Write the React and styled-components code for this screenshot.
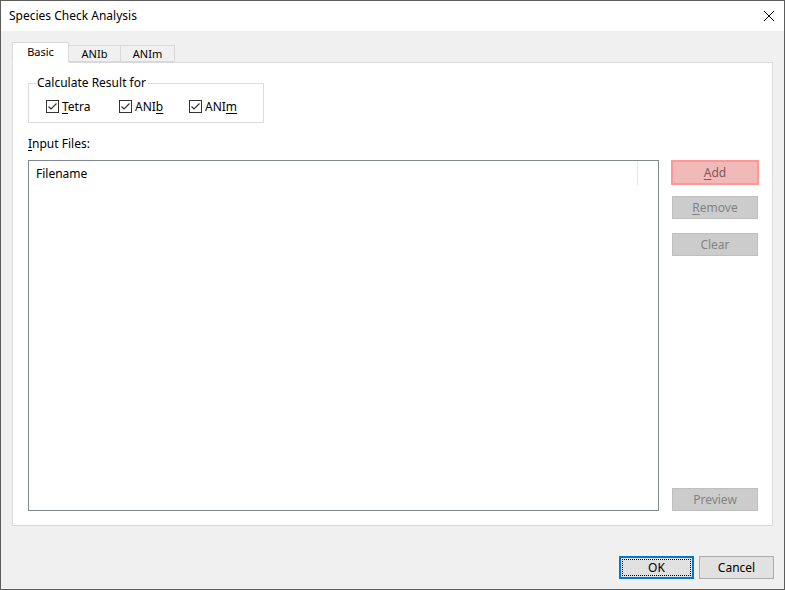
import React, { useState } from 'react';
import styled, { createGlobalStyle } from 'styled-components';

const GlobalStyle = createGlobalStyle`
  html, body {
    margin: 0;
    padding: 0;
    background: #f0f0f0;
  }
  body {
    font-family: 'Noto Sans', 'Open Sans', sans-serif;
    font-size: 12px;
    color: #000;
  }
  * {
    box-sizing: border-box;
  }
`;

const Window = styled.div`
  width: 785px;
  height: 590px;
  border: 1px solid #5c5c5c;
  display: flex;
  flex-direction: column;
  background: #f0f0f0;
`;

const TitleBar = styled.div`
  height: 30px;
  background: #fff;
  display: flex;
  align-items: center;
  justify-content: space-between;
  padding: 0 9px 1px 8px;
  font-size: 12px;
`;

const CloseBox = styled.span`
  width: 12px;
  height: 12px;
  display: flex;
`;

const Body = styled.div`
  flex: 1;
  display: flex;
  flex-direction: column;
  padding: 11px 11px 0 11px;
`;

const TabStrip = styled.div`
  display: flex;
  align-items: flex-end;
  height: 21px;
  position: relative;
  z-index: 1;
`;

const Tab = styled.div`
  height: ${(p) => (p.$active ? '21px' : '17px')};
  width: ${(p) => p.$w}px;
  margin-left: ${(p) => (p.$first ? 0 : -1)}px;
  background: ${(p) => (p.$active ? '#fff' : '#f0f0f0')};
  border: 1px solid #d9d9d9;
  border-bottom: ${(p) => (p.$active ? '1px solid #fff' : '1px solid #d9d9d9')};
  display: flex;
  align-items: center;
  justify-content: center;
  font-size: 11px;
  padding-bottom: ${(p) => (p.$active ? 2 : 0)}px;
  cursor: default;
  margin-bottom: ${(p) => (p.$active ? 0 : 1)}px;
`;

const Panel = styled.div`
  height: 464px;
  margin-top: -1px;
  background: #fff;
  border: 1px solid #d9d9d9;
  padding: 12px 14px 14px 15px;
  display: flex;
  flex-direction: column;
`;

const GroupBox = styled.fieldset`
  margin: 0;
  width: 236px;
  min-width: 0;
  height: 48px;
  border: 1px solid #dcdcdc;
  padding: 0 8px 0 7px;
  display: block;
`;

const Legend = styled.legend`
  padding: 0 2px 0 1px;
  font-size: 12px;
  line-height: 16px;
`;

const CheckRow = styled.div`
  display: flex;
  align-items: center;
  height: 16px;
  padding-left: 10px;
  margin-top: 7px;
`;

const CheckItem = styled.label`
  display: flex;
  align-items: center;
  width: ${(p) => (p.$w ? `${p.$w}px` : 'auto')};
  gap: 3px;
  font-size: 12px;
`;

const Box = styled.span`
  width: 13px;
  height: 13px;
  flex: none;
  border: 1px solid #333;
  background: #fff;
  display: flex;
  align-items: center;
  justify-content: center;
`;

const Key = styled.span`
  text-decoration: underline;
  text-underline-offset: 2px;
`;

const FieldLabel = styled.div`
  margin-top: 13px;
  height: 16px;
  line-height: 16px;
  font-size: 12px;
`;

const Main = styled.div`
  flex: 1;
  display: flex;
  gap: 13px;
  margin-top: 8px;
`;

const ListBox = styled.div`
  width: 631px;
  height: 351px;
  border: 1px solid #828790;
  background: #fff;
`;

const ListHeader = styled.div`
  height: 24px;
  display: flex;
`;

const HeaderCell = styled.div`
  width: 609px;
  padding: 1px 0 0 7px;
  border-right: 1px solid #e5e5e5;
  display: flex;
  align-items: center;
  font-size: 12px;
`;

const Side = styled.div`
  width: 86px;
  display: flex;
  flex-direction: column;
`;

const Button = styled.button`
  font-family: inherit;
  font-size: 12px;
  height: ${(p) => (p.$hot ? 25 : 23)}px;
  width: ${(p) => (p.$hot ? 88 : 86)}px;
  margin: ${(p) => (p.$hot ? '0 0 0 -1px' : 0)};
  margin-top: ${(p) => (p.$bottom ? 'auto' : `${p.$mt || 0}px`)};
  padding: 0;
  background: ${(p) => (p.$hot ? '#f2b9b9' : '#cccccc')};
  border: ${(p) => (p.$hot ? '2px solid #ff9797' : '1px solid #bfbfbf')};
  color: ${(p) => (p.$hot ? '#7b5a5a' : '#838383')};
  cursor: default;
`;

const Footer = styled.div`
  display: flex;
  justify-content: flex-end;
  gap: 5px;
  padding-top: 30px;
  margin-right: -1px;
`;

const DialogButton = styled.button`
  font-family: inherit;
  font-size: 12px;
  width: 75px;
  height: 23px;
  padding: 0;
  background: #e1e1e1;
  border: ${(p) => (p.$default ? '2px solid #0078d7' : '1px solid #adadad')};
  outline: ${(p) => (p.$default ? '1px dotted #000' : 'none')};
  outline-offset: -4px;
  color: #000;
  cursor: default;
`;

function Check({ children, w }) {
  return (
    <CheckItem $w={w}>
      <Box>
        <svg width='11' height='11' viewBox='0 0 11 11'>
          <path d='M1.5 5.5 L4 8 L9.5 2.5' fill='none' stroke='#333' strokeWidth='1.2' />
        </svg>
      </Box>
      {children}
    </CheckItem>
  );
}

export default function App() {
  const [tab, setTab] = useState('Basic');
  const tabs = [
    { name: 'Basic', w: 57 },
    { name: 'ANIb', w: 53 },
    { name: 'ANIm', w: 55 },
  ];

  return (
    <>
      <GlobalStyle />
      <Window>
        <TitleBar>
          <span>Species Check Analysis</span>
          <CloseBox>
            <svg width='12' height='12' viewBox='0 0 12 12'>
              <path d='M1 1 L11 11 M11 1 L1 11' stroke='#000' strokeWidth='1' />
            </svg>
          </CloseBox>
        </TitleBar>
        <Body>
          <TabStrip>
            {tabs.map((t, i) => (
              <Tab
                key={t.name}
                $w={t.w}
                $first={i === 0}
                $active={tab === t.name}
                onClick={() => setTab(t.name)}
              >
                {t.name}
              </Tab>
            ))}
          </TabStrip>
          <Panel>
            <GroupBox>
              <Legend>Calculate Result for</Legend>
              <CheckRow>
                <Check w={73}>
                  <span>
                    <Key>T</Key>etra
                  </span>
                </Check>
                <Check w={70}>
                  <span>
                    ANI<Key>b</Key>
                  </span>
                </Check>
                <Check>
                  <span>
                    ANI<Key>m</Key>
                  </span>
                </Check>
              </CheckRow>
            </GroupBox>
            <FieldLabel>
              <Key>I</Key>nput Files:
            </FieldLabel>
            <Main>
              <ListBox>
                <ListHeader>
                  <HeaderCell>Filename</HeaderCell>
                </ListHeader>
              </ListBox>
              <Side>
                <Button $hot>
                  <Key>A</Key>dd
                </Button>
                <Button $mt={11}>
                  <Key>R</Key>emove
                </Button>
                <Button $mt={14}>Clear</Button>
                <Button $bottom>Preview</Button>
              </Side>
            </Main>
          </Panel>
          <Footer>
            <DialogButton $default>OK</DialogButton>
            <DialogButton>Cancel</DialogButton>
          </Footer>
        </Body>
      </Window>
    </>
  );
}
